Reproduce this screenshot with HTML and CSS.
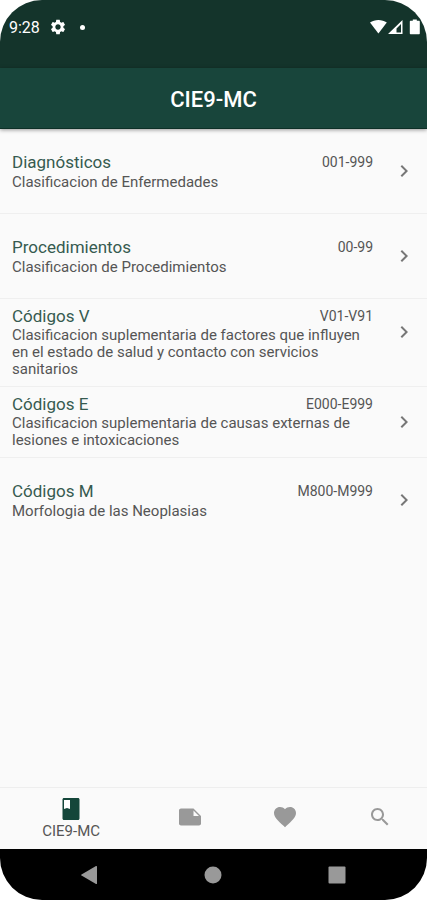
FILE: index.html
```
<!DOCTYPE html>
<html lang="es">
<head>
    <title>CIE9-MC</title>
    <meta charset="UTF-8">
    <meta name="viewport" content="width=device-width, initial-scale=1.0">
    <link rel="stylesheet" href="styles.css">
</head>
<body>
    <div class="phone">
        <div class="status-bar">
            <span class="time">9:28</span>
            <svg class="gear" width="18" height="18" viewBox="0 0 24 24"><path d="M19.14 12.94c.04-.3.06-.61.06-.94 0-.32-.02-.64-.07-.94l2.03-1.58c.18-.14.23-.41.12-.61l-1.92-3.32c-.12-.22-.37-.29-.59-.22l-2.39.96c-.5-.38-1.03-.7-1.62-.94l-.36-2.54c-.04-.24-.24-.41-.48-.41h-3.84c-.24 0-.43.17-.47.41l-.36 2.54c-.59.24-1.13.57-1.62.94l-2.39-.96c-.22-.08-.47 0-.59.22L2.74 8.87c-.12.21-.08.47.12.61l2.03 1.58c-.05.3-.09.63-.09.94s.02.64.07.94l-2.03 1.58c-.18.14-.23.41-.12.61l1.92 3.32c.12.22.37.29.59.22l2.39-.96c.5.38 1.03.7 1.62.94l.36 2.54c.05.24.24.41.48.41h3.84c.24 0 .44-.17.47-.41l.36-2.54c.59-.24 1.13-.56 1.62-.94l2.39.96c.22.08.47 0 .59-.22l1.92-3.32c.12-.22.07-.47-.12-.61l-2.01-1.58zM12 15.6c-1.98 0-3.6-1.62-3.6-3.6s1.62-3.6 3.6-3.6 3.6 1.62 3.6 3.6-1.62 3.6-3.6 3.6z"/></svg>
            <span class="dot"></span>
            <svg class="signals" width="50" height="16" viewBox="0 0 50 16">
                <path d="M0 3.6C4.6.2 12.2.2 16.8 3.6L8.400 14.6z"/>
                <path fill-rule="evenodd" d="M18 15 32.500 1v14zM26.500 9.600V13.500h4.500V5z"/>
                <path d="M40.800 1.800h2V.6h4v1.200h2c.7 0 1 .4 1 1v11.400c0 .6-.3 1-1 1h-8c-.6 0-1-.4-1-1V2.800c0-.6.4-1 1-1z"/>
            </svg>
        </div>
        <header class="app-bar">
            <h1>CIE9-MC</h1>
        </header>

        <main class="list">
            <a class="item" href="#diagnosticos">
                <div class="text">
                    <h2>Diagnósticos</h2>
                    <span class="code">001-999</span>
                    <p>Clasificacion de Enfermedades</p>
                </div>
                <svg class="chevron" viewBox="0 0 24 24"><path d="M10 6 8.590 7.410 13.170 12l-4.580 4.590L10 18l6-6z"/></svg>
            </a>
            <a class="item" href="#procedimientos">
                <div class="text">
                    <h2>Procedimientos</h2>
                    <span class="code">00-99</span>
                    <p>Clasificacion de Procedimientos</p>
                </div>
                <svg class="chevron" viewBox="0 0 24 24"><path d="M10 6 8.590 7.410 13.170 12l-4.580 4.590L10 18l6-6z"/></svg>
            </a>
            <a class="item dense three-line" href="#codigos-v">
                <div class="text">
                    <h2>Códigos V</h2>
                    <span class="code">V01-V91</span>
                    <p>Clasificacion suplementaria de factores que influyen en el estado de salud y contacto con servicios sanitarios</p>
                </div>
                <svg class="chevron" viewBox="0 0 24 24"><path d="M10 6 8.590 7.410 13.170 12l-4.580 4.590L10 18l6-6z"/></svg>
            </a>
            <a class="item dense" href="#codigos-e">
                <div class="text">
                    <h2>Códigos E</h2>
                    <span class="code">E000-E999</span>
                    <p>Clasificacion suplementaria de causas externas de lesiones e intoxicaciones</p>
                </div>
                <svg class="chevron" viewBox="0 0 24 24"><path d="M10 6 8.590 7.410 13.170 12l-4.580 4.590L10 18l6-6z"/></svg>
            </a>
            <a class="item last" href="#codigos-m">
                <div class="text">
                    <h2>Códigos M</h2>
                    <span class="code">M800-M999</span>
                    <p>Morfologia de las Neoplasias</p>
                </div>
                <svg class="chevron" viewBox="0 0 24 24"><path d="M10 6 8.590 7.410 13.170 12l-4.580 4.590L10 18l6-6z"/></svg>
            </a>
        </main>

        <nav class="tabs">
            <button class="tab active" type="button">
                <svg viewBox="0 0 24 24"><path d="M19 1H5c-.9 0-1.500.6-1.500 1.500v19c0 .9.6 1.500 1.500 1.500h14c.9 0 1.500-.6 1.500-1.500v-19c0-.9-.6-1.500-1.500-1.500z"/><path class="page" d="M5 3h6v9l-3-1L5 12z"/></svg>
                <span>CIE9-MC</span>
            </button>
            <button class="tab" type="button" aria-label="Notas">
                <svg viewBox="0 0 24 24"><path fill-rule="evenodd" d="M15.500 3.500H3c-1.100 0-2 .9-2 2v13c0 1.100.9 2 2 2h18c1.100 0 2-.9 2-2V11zM15.500 5.500 21 11h-5.500z"/></svg>
            </button>
            <button class="tab" type="button" aria-label="Favoritos">
                <svg viewBox="0 0 24 24"><path d="m12 22.200-1.500-1.400C4.800 15.600 1 12.200 1 8 1 4.600 3.700 2 7 2c1.900 0 3.800.9 5 2.300C13.200 2.900 15.100 2 17 2c3.300 0 6 2.600 6 6 0 4.200-3.800 7.600-9.500 12.800z"/></svg>
            </button>
            <button class="tab" type="button" aria-label="Buscar">
                <svg viewBox="0 0 24 24"><path d="M15.500 14h-.79l-.28-.27C15.410 12.590 16 11.110 16 9.500 16 5.910 13.090 3 9.500 3S3 5.910 3 9.500 5.910 16 9.500 16c1.610 0 3.090-.59 4.230-1.570l.27.28v.79l5 4.990L20.490 19l-4.990-5zm-6 0C7.010 14 5 11.990 5 9.500S7.010 5 9.500 5 14 7.010 14 9.500 11.990 14 9.500 14z"/></svg>
            </button>
        </nav>

        <div class="system-nav">
            <button type="button" aria-label="Atrás"><svg viewBox="0 0 20 20"><path d="M17 1.500v17c0 .5-.5.7-1 .5L1.500 10.600c-.5-.3-.5-.9 0-1.200L16 1c.5-.2 1 0 1 .5z"/></svg></button>
            <button type="button" aria-label="Inicio"><svg viewBox="0 0 20 20"><circle cx="10" cy="10" r="8.500"/></svg></button>
            <button type="button" aria-label="Recientes"><svg viewBox="0 0 20 20"><rect x="1.500" y="1.500" width="17" height="17" rx="1"/></svg></button>
        </div>
    </div>
</body>
</html>
```
FILE: styles.css
```
* {
    box-sizing: border-box;
}
body {
    margin: 0;
    background: #fff;
    font-family: Roboto, sans-serif;
}
h1, h2, p {
    margin: 0;
}
button {
    padding: 0;
    border: none;
    background: none;
    font-family: inherit;
}
.phone {
    display: flex;
    flex-direction: column;
    min-height: 100vh;
    border-radius: 42px;
    overflow: hidden;
    background: #fafafa;
}

/* top bars */
.status-bar {
    display: flex;
    align-items: center;
    height: 68px;
    padding: 0 7px 14px 9px;
    background: #14342b;
    color: #fff;
}
.status-bar svg {
    fill: #fff;
}
.time {
    font-size: 16px;
}
.gear {
    margin-left: 9px;
}
.dot {
    width: 5px;
    height: 5px;
    margin-left: 13px;
    border-radius: 50%;
    background: #fff;
}
.signals {
    margin-left: auto;
}
.app-bar {
    display: flex;
    align-items: center;
    justify-content: center;
    height: 61px;
    padding-top: 2px;
    background: #18453b;
    border-bottom: 1px solid #0d3027;
    box-shadow: 0 1px 4px rgba(0, 0, 0, 0.4);
    color: #fff;
}
.app-bar h1 {
    font-size: 22px;
    font-weight: 500;
}

/* list */
.list {
    flex: 1;
}
.item {
    display: flex;
    align-items: center;
    min-height: 85px;
    padding: 8px 11px 8px 12px;
    border-bottom: 1px solid #efefef;
    color: #555;
    text-decoration: none;
}
.text {
    flex: 1;
    display: grid;
    grid-template-columns: 1fr auto;
    row-gap: 3px;
    padding-top: 2px;
}
.text h2 {
    font-size: 17px;
    font-weight: 400;
    line-height: 18px;
    color: #365a50;
}
.text p {
    grid-column: 1 / 3;
    font-size: 15px;
    line-height: 17px;
}
.code {
    font-size: 14px;
    line-height: 18px;
}
.chevron {
    width: 24px;
    height: 24px;
    margin-left: 19px;
    fill: #777;
}
.dense {
    min-height: 71px;
}
.dense .text {
    row-gap: 2px;
    padding-top: 0;
}
.three-line {
    align-items: flex-start;
}
.three-line .chevron {
    margin-top: 13px;
}
.last {
    min-height: 83px;
    border-bottom: none;
}

/* bottom bars */
.tabs {
    display: flex;
    height: 62px;
    border-top: 1px solid #eee;
}
.tab {
    flex: 2;
    display: flex;
    flex-direction: column;
    align-items: center;
    justify-content: center;
    padding-bottom: 4px;
    color: #555;
    font-size: 15px;
    line-height: 20px;
}
.tab svg {
    width: 24px;
    height: 24px;
    fill: #999;
}
.tab.active {
    flex: 3;
    padding-bottom: 0;
}
.tab.active svg {
    fill: #14463a;
}
.tab .page {
    fill: #fff;
}
.system-nav {
    display: flex;
    justify-content: space-around;
    height: 51px;
    padding: 0 28px;
    background: #000;
}
.system-nav svg {
    display: block;
    width: 20px;
    height: 20px;
    fill: #999;
}
```
